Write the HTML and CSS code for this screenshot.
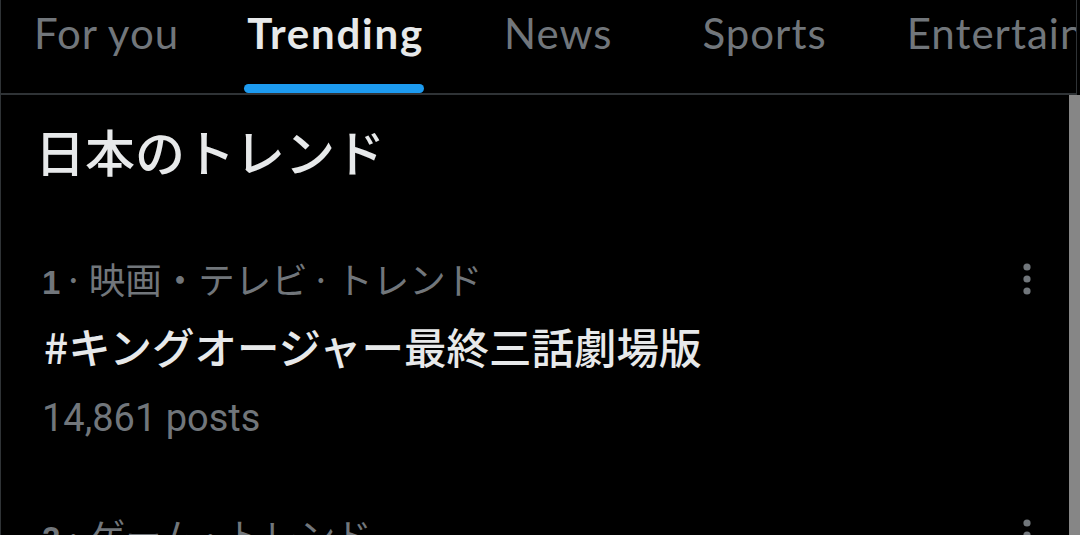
FILE: index.html
```html
<!DOCTYPE html>
<html lang="ja">
<head>
<meta charset="utf-8">
<title>Trending</title>
<link rel="stylesheet" href="styles.css">
</head>
<body>
<div class="app">
  <div class="column">
    <nav class="tabs">
      <div class="tab tab-foryou"><span class="tab-label">For you</span></div>
      <div class="tab tab-trending active"><span class="tab-label">Trending</span><span class="indicator"></span></div>
      <div class="tab tab-news"><span class="tab-label">News</span></div>
      <div class="tab tab-sports"><span class="tab-label">Sports</span></div>
      <div class="tab tab-ent"><span class="tab-label">Entertainment</span></div>
    </nav>
    <section class="content">
      <h2 class="section-title">日本のトレンド</h2>
      <div class="trend">
        <div class="trend-meta">
          <span class="meta-text"><b class="rank">1</b><span class="dot">·</span>映画・テレビ<span class="dot">·</span>トレンド</span>
          <svg class="kebab" width="12" height="34" viewBox="0 0 12 34"><circle cx="6" cy="5" r="3.6"/><circle cx="6" cy="17" r="3.6"/><circle cx="6" cy="29" r="3.6"/></svg>
        </div>
        <div class="trend-name">#キングオージャー最終三話劇場版</div>
        <div class="trend-count">14,861 posts</div>
      </div>
      <div class="trend">
        <div class="trend-meta">
          <span class="meta-text"><b class="rank">2</b><span class="dot">·</span>ゲーム<span class="dot">·</span>トレンド</span>
          <svg class="kebab" width="12" height="34" viewBox="0 0 12 34"><circle cx="6" cy="5" r="3.6"/><circle cx="6" cy="17" r="3.6"/><circle cx="6" cy="29" r="3.6"/></svg>
        </div>
      </div>
    </section>
  </div>
  <div class="scroll-thumb"></div>
</div>
</body>
</html>
```

FILE: styles.css
```css
html, body {
  margin: 0;
  padding: 0;
  background: #000;
  height: 100%;
  overflow: hidden;
}

.app {
  position: relative;
  width: 1080px;
  height: 535px;
  overflow: hidden;
}

.column {
  width: 1077px;
  height: 100%;
  border-left: 1px solid #2f3336;
  border-right: 1px solid #2f3336;
  box-sizing: border-box;
}

.tabs {
  display: flex;
  height: 93px;
  border-bottom: 2px solid #2f3336;
  font-family: Lato, "Noto Sans", sans-serif;
  font-size: 42px;
  letter-spacing: 1px;
  white-space: nowrap;
  overflow: hidden;
}

.tab {
  position: relative;
  display: flex;
  align-items: flex-start;
  padding-top: 8px;
  color: #71767b;
  flex: none;
}

.tab-foryou { padding-left: 33px; }
.tab-trending { margin-left: 68px; }
.tab-news { margin-left: 80px; }
.tab-sports { margin-left: 90px; }
.tab-ent { margin-left: 80px; }

.tab.active {
  color: #e7e9ea;
  font-weight: 700;
  letter-spacing: 1.8px;
}

.indicator {
  position: absolute;
  left: -3px;
  right: 0;
  bottom: 0;
  height: 9px;
  border-radius: 5px;
  background: #1d9bf0;
}

.content {
  padding-left: 34px;
  font-family: "Noto Sans CJK JP", "Noto Sans", sans-serif;
}

.section-title {
  margin: 0;
  padding-top: 19px;
  font-size: 50px;
  font-weight: 500;
  line-height: 72px;
  color: #e7e9ea;
}

.trend {
  padding-top: 73px;
  padding-right: 43px;
}

.trend-meta {
  display: flex;
  justify-content: space-between;
  align-items: center;
  height: 44px;
}

.meta-text {
  font-size: 36.5px;
  color: #71767b;
  line-height: 44px;
  padding-left: 7px;
}

.rank {
  font-family: "Liberation Sans", Arial, sans-serif;
  font-weight: 700;
  font-size: 33px;
}

.dot {
  padding: 0 5px 0 3px;
}

.kebab {
  fill: #71767b;
  margin-top: -4px;
}

.trend-name {
  margin-top: 14px;
  font-size: 42.5px;
  font-weight: 500;
  line-height: 58px;
  color: #e7e9ea;
  padding-left: 9px;
}

.trend-count {
  margin-top: 21px;
  font-family: Roboto, "Noto Sans", sans-serif;
  font-size: 38px;
  line-height: 44px;
  color: #71767b;
  padding-left: 7px;
}

.trend + .trend {
  padding-top: 75px;
}

.scroll-thumb {
  position: absolute;
  top: 95px;
  right: 0;
  width: 11px;
  bottom: 0;
  background: #868686;
}
```
